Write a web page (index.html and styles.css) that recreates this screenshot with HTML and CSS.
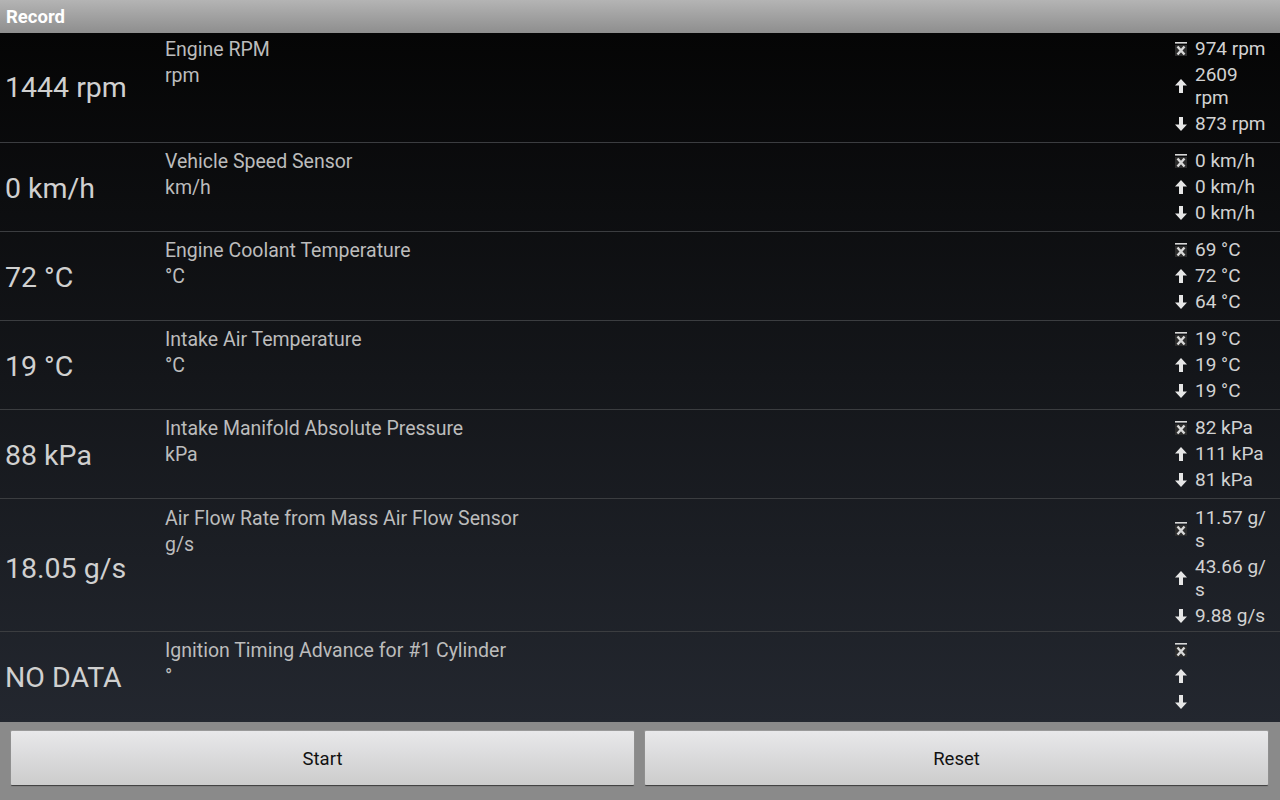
FILE: index.html
```html
<!DOCTYPE html>
<html lang="en">

<head>
    <meta charset="UTF-8">
    <meta name="viewport" content="width=device-width, initial-scale=1.0">
    <title>Record</title>
    <link rel="stylesheet" href="styles.css">
</head>

<body>

    <div class="titleBar">Record</div>

    <div id="sensorList">
        <div class="row row1">
            <div class="value">1444 rpm</div>
            <div class="info">
                <div class="name">Engine RPM</div>
                <div class="unit">rpm</div>
            </div>
            <div class="stats">
                <div class="stat"><span class="icon avg"></span><span class="num">974 rpm</span></div>
                <div class="stat"><span class="icon up"></span><span class="num">2609 rpm</span></div>
                <div class="stat"><span class="icon down"></span><span class="num">873 rpm</span></div>
            </div>
        </div>
        <div class="row">
            <div class="value">0 km/h</div>
            <div class="info">
                <div class="name">Vehicle Speed Sensor</div>
                <div class="unit">km/h</div>
            </div>
            <div class="stats">
                <div class="stat"><span class="icon avg"></span><span class="num">0 km/h</span></div>
                <div class="stat"><span class="icon up"></span><span class="num">0 km/h</span></div>
                <div class="stat"><span class="icon down"></span><span class="num">0 km/h</span></div>
            </div>
        </div>
        <div class="row">
            <div class="value">72 °C</div>
            <div class="info">
                <div class="name">Engine Coolant Temperature</div>
                <div class="unit">°C</div>
            </div>
            <div class="stats">
                <div class="stat"><span class="icon avg"></span><span class="num">69 °C</span></div>
                <div class="stat"><span class="icon up"></span><span class="num">72 °C</span></div>
                <div class="stat"><span class="icon down"></span><span class="num">64 °C</span></div>
            </div>
        </div>
        <div class="row">
            <div class="value">19 °C</div>
            <div class="info">
                <div class="name">Intake Air Temperature</div>
                <div class="unit">°C</div>
            </div>
            <div class="stats">
                <div class="stat"><span class="icon avg"></span><span class="num">19 °C</span></div>
                <div class="stat"><span class="icon up"></span><span class="num">19 °C</span></div>
                <div class="stat"><span class="icon down"></span><span class="num">19 °C</span></div>
            </div>
        </div>
        <div class="row">
            <div class="value">88 kPa</div>
            <div class="info">
                <div class="name">Intake Manifold Absolute Pressure</div>
                <div class="unit">kPa</div>
            </div>
            <div class="stats">
                <div class="stat"><span class="icon avg"></span><span class="num">82 kPa</span></div>
                <div class="stat"><span class="icon up"></span><span class="num">111 kPa</span></div>
                <div class="stat"><span class="icon down"></span><span class="num">81 kPa</span></div>
            </div>
        </div>
        <div class="row row6">
            <div class="value">18.05 g/s</div>
            <div class="info">
                <div class="name">Air Flow Rate from Mass Air Flow Sensor</div>
                <div class="unit">g/s</div>
            </div>
            <div class="stats">
                <div class="stat"><span class="icon avg"></span><span class="num">11.57 g/<wbr>s</span></div>
                <div class="stat"><span class="icon up"></span><span class="num">43.66 g/<wbr>s</span></div>
                <div class="stat"><span class="icon down"></span><span class="num">9.88 g/s</span></div>
            </div>
        </div>
        <div class="row last">
            <div class="value">NO DATA</div>
            <div class="info">
                <div class="name">Ignition Timing Advance for #1 Cylinder</div>
                <div class="unit">°</div>
            </div>
            <div class="stats">
                <div class="stat"><span class="icon avg"></span><span class="num"></span></div>
                <div class="stat"><span class="icon up"></span><span class="num"></span></div>
                <div class="stat"><span class="icon down"></span><span class="num"></span></div>
            </div>
        </div>
    </div>

    <div class="buttonBar">
        <button class="btn">Start</button>
        <button class="btn">Reset</button>
    </div>

    <script>
        // icons for avg / max / min
        const icons = {
            avg: '<svg width="12" height="14" viewBox="0 0 12 14"><rect x="0" y="3" width="12" height="11" fill="#2c2c2c"/><rect x="0" y="0" width="12" height="1.6" fill="#d8d8d8"/><path d="M2.5 4.5 L9.5 12.5 M9.5 4.5 L2.5 12.5" stroke="#d8d8d8" stroke-width="2.4"/></svg>',
            up: '<svg width="12" height="14" viewBox="0 0 12 14"><path d="M6 0 L12 6.5 L8 6.5 L8 14 L4 14 L4 6.5 L0 6.5 Z" fill="#e6e6e6"/></svg>',
            down: '<svg width="12" height="14" viewBox="0 0 12 14"><path d="M6 14 L12 7.5 L8 7.5 L8 0 L4 0 L4 7.5 L0 7.5 Z" fill="#e6e6e6"/></svg>'
        };

        for (let kind of Object.keys(icons)) {
            document.querySelectorAll('.icon.' + kind).forEach(el => el.innerHTML = icons[kind]);
        }
    </script>

</body>

</html>
```

FILE: styles.css
```css
body {
    margin: 0;
    width: 1280px;
    height: 800px;
    overflow: hidden;
    display: flex;
    flex-direction: column;
    font-family: Roboto, "Liberation Sans", sans-serif;
    background-color: #8a8a8a;
}

.titleBar {
    height: 33px;
    line-height: 35px;
    padding-left: 6px;
    background: linear-gradient(#b4b4b4, #8e8e8e);
    color: #fff;
    font-weight: bold;
    font-size: 18.5px;
    flex-shrink: 0;
}

#sensorList {
    height: 689px;
    background: linear-gradient(#050505, #23272f);
    flex-shrink: 0;
}

.row {
    display: flex;
    border-bottom: 1px solid #3b3d40;
    padding: 6px 0 7px 0;
}

.row.last {
    border-bottom: none;
}

.row1 {
    padding-top: 4px;
}

.row6 {
    padding-top: 7px;
    padding-bottom: 4px;
}

.value {
    width: 160px;
    padding-left: 5px;
    padding-top: 3px;
    align-self: center;
    font-size: 28.5px;
    color: #d0d0d0;
}

.info {
    flex: 1;
    color: #bcbcbc;
    font-size: 19.5px;
    line-height: 26px;
}

.stats {
    width: 105px;
    padding-right: 7px;
    box-sizing: border-box;
    display: flex;
    flex-direction: column;
    gap: 3px;
}

.stat {
    display: flex;
    align-items: center;
    min-height: 23px;
}

.icon {
    width: 20px;
    flex-shrink: 0;
    display: flex;
    justify-content: flex-start;
}

.icon svg {
    display: block;
}

.num {
    color: #d2d2d2;
    font-size: 19px;
    line-height: 23px;
}

.buttonBar {
    flex: 1;
    display: flex;
    gap: 11px;
    padding: 9px 12px 15px 11px;
}

.btn {
    flex: 1;
    border: none;
    border-radius: 1px;
    padding-top: 3px;
    background: linear-gradient(#e8e8ea, #cccccc);
    box-shadow: 0 1px 1px #3a3a3a, 0 0 0 1px #9a9a9a;
    font-family: Roboto, "Liberation Sans", sans-serif;
    font-size: 18.5px;
    color: #111;
}
```
